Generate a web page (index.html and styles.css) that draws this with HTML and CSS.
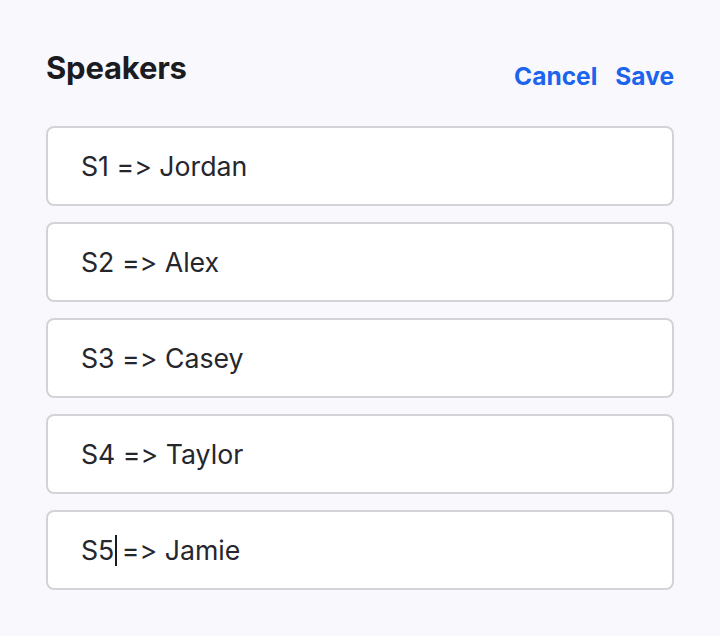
FILE: index.html
```html
<!DOCTYPE html>
<html>
<head>
<meta charset="utf-8">
<link rel="stylesheet" href="styles.css">
</head>
<body>
<div class="panel">
  <div class="header">
    <h1 class="title">Speakers</h1>
    <div class="actions">
      <span class="action">Cancel</span>
      <span class="action">Save</span>
    </div>
  </div>
  <div class="list">
    <div class="field">S1 =&gt; Jordan</div>
    <div class="field">S2 =&gt; Alex</div>
    <div class="field">S3 =&gt; Casey</div>
    <div class="field">S4 =&gt; Taylor</div>
    <div class="field">S5<span class="caret"></span> =&gt; Jamie</div>
  </div>
</div>
</body>
</html>
```
FILE: styles.css
```css
html, body {
  margin: 0;
  padding: 0;
  background: #f9f9fd;
}
body {
  font-family: Inter, "Noto Sans", sans-serif;
  font-feature-settings: "calt" 0, "liga" 0;
  font-variant-ligatures: none;
  width: 720px;
  height: 636px;
}
.panel {
  padding: 49px 46px 0 46px;
}
.header {
  display: flex;
  justify-content: space-between;
  align-items: flex-start;
  height: 77px;
}
.title {
  margin: 0;
  font-size: 31px;
  font-weight: 700;
  color: #1b1c22;
  letter-spacing: -0.2px;
  line-height: 38px;
}
.actions {
  display: flex;
  gap: 18px;
  line-height: 34px;
  margin-top: 10px;
}
.action {
  font-size: 24.5px;
  font-weight: 700;
  color: #1c64ee;
}
.list {
  display: flex;
  flex-direction: column;
  gap: 16px;
}
.field {
  box-sizing: border-box;
  height: 80px;
  border: 2px solid #d2d2d8;
  border-radius: 8px;
  background: #ffffff;
  padding: 0 33px;
  display: flex;
  align-items: center;
  font-size: 26.7px;
  color: #26262d;
  white-space: pre;
}
.caret {
  display: inline-block;
  width: 2px;
  height: 31px;
  background: #1b1c22;
  margin-left: 1px;
  margin-right: -3px;
}
```
